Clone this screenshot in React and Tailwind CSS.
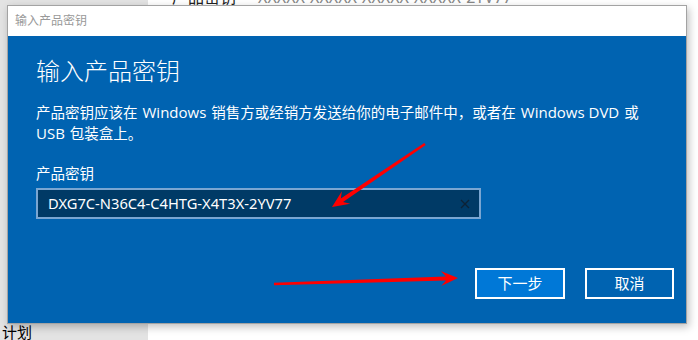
const cjk = '"Noto Sans", "Noto Sans CJK SC", sans-serif';

function Arrow({ from, to }) {
  const [tx, ty] = from;
  const [px, py] = to;
  const len = Math.hypot(px - tx, py - ty);
  const ux = (px - tx) / len;
  const uy = (py - ty) / len;
  const nx = -uy;
  const ny = ux;
  const h = 17;
  const w = 7.5;
  const bx = px - ux * h;
  const by = py - uy * h;
  const mx = px - ux * (h - 5);
  const my = py - uy * (h - 5);
  const pts = [
    [tx + nx * 1.3, ty + ny * 1.3],
    [mx + nx * 2, my + ny * 2],
    [bx + nx * w, by + ny * w],
    [px, py],
    [bx - nx * w, by - ny * w],
    [mx - nx * 2, my - ny * 2],
    [tx - nx * 1.3, ty - ny * 1.3],
  ];
  return <polygon points={pts.map(p => p.join(',')).join(' ')} fill="#ff0000" />;
}

// latin words are set a little larger, like Segoe UI next to YaHei
function L({ children, first }) {
  return (
    <span className={`text-[15px] mr-[5px] ${first ? '' : 'ml-[5px]'}`} style={{ fontFamily: '"Open Sans", sans-serif' }}>
      {children}
    </span>
  );
}

export default function App() {
  return (
    <div className="relative w-[698px] h-[340px] overflow-hidden bg-white flex" style={{ fontFamily: cjk }}>
      {/* page behind the dialog */}
      <div className="w-[148px] bg-[#e3e3e3] flex flex-col justify-end">
        <div className="pl-[2px] text-[15px] leading-[18px] text-black -mb-[1px]">计划</div>
      </div>
      <div className="flex-1">
        <div className="flex items-end gap-[22px] pl-[24px] -mt-[12px] text-[16px] leading-[18px]">
          <span className="text-[#222]">产品密钥</span>
          <span className="text-[#888]">XXXXX-XXXXX-XXXXX-XXXXX-2YV77</span>
        </div>
      </div>

      {/* dialog */}
      <div className="absolute left-[7px] top-[5px] w-[680px] h-[319px] border border-[#a3a3a3] flex flex-col shadow-[2px_3px_8px_rgba(0,0,0,0.25)]">
        <div className="h-[30px] bg-white flex items-center pl-[7px] text-[12px] text-[#999]">输入产品密钥</div>
        <div className="flex-1 bg-[#0063b1] flex flex-col pl-[28px] pr-[12px] pt-[20px] pb-[24px] text-white">
          <h1 className="text-[24px] leading-[30px] font-light">输入产品密钥</h1>
          <p className="mt-[16px] text-[14.5px] leading-[21px] whitespace-nowrap">
            产品密钥应该在<L>Windows</L>销售方或经销方发送给你的电子邮件中，或者在<L>Windows DVD</L>或<br />
            <L first>USB</L>包装盒上。
          </p>
          <label className="mt-[19px] text-[14.5px] leading-[20px]">产品密钥</label>
          <div className="mt-[5px] w-[445px] h-[31px] border-2 border-[#7aa6d2] bg-[#003a66] flex items-center pl-[10px] pr-[9px]">
            <span className="flex-1 text-[14.7px]">DXG7C-N36C4-C4HTG-X4T3X-2YV77</span>
            <svg width="10" height="10" viewBox="0 0 10 10" className="text-[#0d2236]">
              <path d="M1 1L9 9M9 1L1 9" stroke="currentColor" strokeWidth="1.3" />
            </svg>
          </div>
          <div className="mt-auto flex justify-end gap-[20px]">
            <button className="w-[90px] h-[31px] border-2 border-white bg-[#0078d7] text-[15px] text-white">下一步</button>
            <button className="w-[89px] h-[31px] border-2 border-white bg-[#0063b1] text-[15px] text-white">取消</button>
          </div>
        </div>
      </div>

      {/* red annotation arrows */}
      <svg className="absolute inset-0 pointer-events-none" width="698" height="340">
        <Arrow from={[425, 144]} to={[332, 207]} />
        <Arrow from={[274, 284]} to={[458, 278]} />
      </svg>
    </div>
  );
}
